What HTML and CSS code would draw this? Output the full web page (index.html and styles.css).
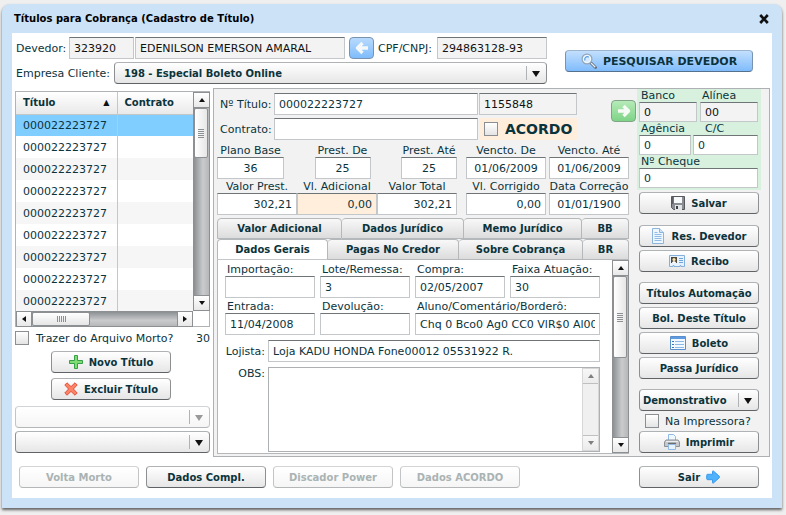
FILE: index.html
```html
<!DOCTYPE html>
<html lang="pt-BR">
<head>
    <meta charset="UTF-8">
    <meta name="viewport" content="width=device-width, initial-scale=1.0">
    <title>Títulos para Cobrança</title>
    <link rel="stylesheet" href="styles.css">
</head>
<body>
    <main class="window">
        <header class="title-bar">
            <h1>Títulos para Cobrança (Cadastro de Título)</h1>
            <button type="button" class="close" aria-label="Fechar">
                <svg width="10" height="10" viewBox="0 0 10 10"><path d="M1.2 1l7.600 8M8.800 1L1.200 9" stroke="#111" stroke-width="2.6"/></svg>
            </button>
        </header>

        <form class="content">
            <section class="search">
                <div class="search-fields">
                    <div class="line">
                        <label class="devedor-label" for="devedor">Devedor:</label>
                        <input class="readonly code" id="devedor" value="323920" readonly>
                        <input class="readonly name" aria-label="Nome" value="EDENILSON EMERSON AMARAL" readonly>
                        <button type="button" class="arrow-btn blue" aria-label="Voltar">
                            <svg width="14" height="14" viewBox="0 0 14 14"><path d="M7.500 2L2.500 7l5 5M3.500 7H13" fill="none" stroke="#f4f8fb" stroke-width="3.4" stroke-linejoin="round"/></svg>
                        </button>
                        <label class="cpf-label" for="cpf">CPF/CNPJ:</label>
                        <input class="readonly cpf" id="cpf" value="294863128-93" readonly>
                    </div>
                    <div class="line">
                        <label class="empresa-label" for="empresa">Empresa Cliente:</label>
                        <div class="combo empresa">
                            <select id="empresa"><option>198 - Especial Boleto Online</option></select>
                        </div>
                    </div>
                </div>
                <button type="button" class="btn btn-search">
                    <svg width="16" height="16" viewBox="0 0 16 16">
                        <path d="M10 10l4.500 4.500" stroke="#5d6a7a" stroke-width="2.8" stroke-linecap="round"/>
                        <path d="M10 10l4.300 4.300" stroke="#e3ebf3" stroke-width="1.3"/>
                        <circle cx="6" cy="6" r="4.900" fill="#d6ebfd" stroke="#93a5b8" stroke-width="1.2"/>
                        <circle cx="6" cy="6" r="3.600" fill="none" stroke="#f4faff" stroke-width="1"/>
                        <path d="M4 7.500a2.600 2.600 0 0 1 3.800-3.300" fill="none" stroke="#5b9fe0" stroke-width="1.2"/>
                    </svg>
                    PESQUISAR DEVEDOR
                </button>
            </section>

            <div class="columns">
                <!-- Lista de títulos -->
                <aside class="list">
                    <div class="grid-box">
                        <div class="grid-view">
                            <table>
                                <thead>
                                    <tr><th class="sorted">Título <span>▲</span></th><th>Contrato</th></tr>
                                </thead>
                                <tbody>
                                    <tr class="selected"><td>000022223727</td><td></td></tr>
                                    <tr><td>000022223727</td><td></td></tr>
                                    <tr><td>000022223727</td><td></td></tr>
                                    <tr><td>000022223727</td><td></td></tr>
                                    <tr><td>000022223727</td><td></td></tr>
                                    <tr><td>000022223727</td><td></td></tr>
                                    <tr><td>000022223727</td><td></td></tr>
                                    <tr><td>000022223727</td><td></td></tr>
                                    <tr><td>000022223727</td><td></td></tr>
                                </tbody>
                            </table>
                        </div>
                        <div class="scroll vertical">
                            <button type="button" class="up" aria-label="Subir"></button>
                            <div class="thumb list-thumb"></div>
                            <button type="button" class="down" aria-label="Descer"></button>
                        </div>
                        <div class="scroll horizontal">
                            <button type="button" class="left" aria-label="Esquerda"></button>
                            <div class="thumb wide-thumb"></div>
                            <button type="button" class="right" aria-label="Direita"></button>
                        </div>
                        <div class="corner"></div>
                    </div>
                    <div class="dead-file">
                        <input type="checkbox" id="morto">
                        <label for="morto">Trazer do Arquivo Morto?</label>
                        <span>30</span>
                    </div>
                    <div class="list-buttons">
                        <button type="button" class="btn">
                            <svg width="14" height="14" viewBox="0 0 14 14"><path d="M5.500.5h3v5h5v3h-5v5h-3v-5h-5v-3h5z" fill="#7fdc72" stroke="#35a046"/></svg>
                            Novo Título
                        </button>
                        <button type="button" class="btn">
                            <svg width="14" height="14" viewBox="0 0 14 14"><path d="M3 .8L7 4.600l4-3.800L13.200 3 9.400 7l3.800 4-2.200 2.200L7 9.400l-4 3.800L.8 11l3.800-4L.8 3z" fill="#fd8367" stroke="#e0503a"/></svg>
                            Excluir Título
                        </button>
                    </div>
                    <div class="combo off first-combo"><select aria-label="Filtro" disabled><option></option></select></div>
                    <div class="combo second-combo"><select aria-label="Ordem"><option></option></select></div>
                </aside>

                <section class="panel">
                    <div class="details">
                        <div class="top-fields">
                            <div class="top-lines">
                                <div class="line">
                                    <label class="top-label" for="titulo">Nº Título:</label>
                                    <input class="titulo" id="titulo" value="000022223727">
                                    <input class="readonly numero" aria-label="Número" value="1155848" readonly>
                                </div>
                                <div class="line">
                                    <label class="top-label" for="contrato">Contrato:</label>
                                    <input class="titulo" id="contrato">
                                    <div class="acordo">
                                        <input type="checkbox" id="acordo">
                                        <label for="acordo">ACORDO</label>
                                    </div>
                                </div>
                            </div>
                            <button type="button" class="arrow-btn green" aria-label="Avançar">
                                <svg width="14" height="14" viewBox="0 0 14 14"><path d="M6.500 2l5 5-5 5M1 7h9.500" fill="none" stroke="#f6fbf6" stroke-width="3.400" stroke-linejoin="round"/></svg>
                            </button>
                        </div>

                        <div class="values">
                            <div class="trio spread">
                                <div class="field plan"><label for="plano">Plano Base</label><input id="plano" value="36"></div>
                                <div class="field part"><label for="de">Prest. De</label><input id="de" value="25"></div>
                                <div class="field part"><label for="ate">Prest. Até</label><input id="ate" value="25"></div>
                            </div>
                            <div class="pair">
                                <div class="field"><label for="vde">Vencto. De</label><input id="vde" value="01/06/2009"></div>
                                <div class="field"><label for="vate">Vencto. Até</label><input id="vate" value="01/06/2009"></div>
                            </div>
                        </div>
                        <div class="values">
                            <div class="trio">
                                <div class="field money"><label for="vprest">Valor Prest.</label><input id="vprest" value="302,21"></div>
                                <div class="field money extra"><label for="vadic">Vl. Adicional</label><input id="vadic" value="0,00"></div>
                                <div class="field money"><label for="vtotal">Valor Total</label><input id="vtotal" value="302,21"></div>
                            </div>
                            <div class="pair">
                                <div class="field money"><label for="vcorr">Vl. Corrigido</label><input id="vcorr" value="0,00"></div>
                                <div class="field"><label for="dcorr">Data Correção</label><input id="dcorr" value="01/01/1900"></div>
                            </div>
                        </div>

                        <div class="tabs tabs-back">
                            <button type="button">Valor Adicional</button>
                            <button type="button">Dados Jurídico</button>
                            <button type="button">Memo Jurídico</button>
                            <button type="button">BB</button>
                        </div>
                        <div class="tabs tabs-front">
                            <button type="button" class="active">Dados Gerais</button>
                            <button type="button">Pagas No Credor</button>
                            <button type="button">Sobre Cobrança</button>
                            <button type="button">BR</button>
                        </div>
                        <div class="tab-body">
                            <div class="general">
                                <div class="general-grid">
                                    <div class="item"><label for="imp">Importação:</label><input id="imp"></div>
                                    <div class="item"><label for="lote">Lote/Remessa:</label><input id="lote" value="3"></div>
                                    <div class="item"><label for="compra">Compra:</label><input id="compra" value="02/05/2007"></div>
                                    <div class="item"><label for="faixa">Faixa Atuação:</label><input id="faixa" value="30"></div>
                                    <div class="item"><label for="entrada">Entrada:</label><input id="entrada" value="11/04/2008"></div>
                                    <div class="item"><label for="devol">Devolução:</label><input id="devol"></div>
                                    <div class="item double"><label for="aluno">Aluno/Comentário/Borderô:</label><input id="aluno" value="Chq 0 Bco0 Ag0 CC0 VlR$0 Al00"></div>
                                </div>
                                <div class="wide-line">
                                    <label for="lojista">Lojista:</label>
                                    <input id="lojista" value="Loja KADU HONDA Fone00012 05531922 R.">
                                </div>
                                <div class="wide-line obs">
                                    <label for="obs">OBS:</label>
                                    <div class="obs-box">
                                        <textarea id="obs"></textarea>
                                        <div class="scroll vertical faded">
                                            <button type="button" class="up" aria-label="Subir" disabled></button>
                                            <button type="button" class="down" aria-label="Descer" disabled></button>
                                        </div>
                                    </div>
                                </div>
                            </div>
                            <div class="scroll vertical">
                                <button type="button" class="up" aria-label="Subir"></button>
                                <div class="thumb body-thumb"></div>
                                <button type="button" class="down" aria-label="Descer"></button>
                            </div>
                        </div>
                    </div>

                    <div class="actions">
                        <div class="bank">
                            <div class="item half"><label for="banco">Banco</label><input class="readonly" id="banco" value="0" readonly></div>
                            <div class="item half"><label for="alinea">Alínea</label><input class="readonly" id="alinea" value="00" readonly></div>
                            <div class="item agency"><label for="agencia">Agência</label><input id="agencia" value="0"></div>
                            <div class="item account"><label for="cc">C/C</label><input id="cc" value="0"></div>
                            <div class="item full"><label for="cheque">Nº Cheque</label><input id="cheque" value="0"></div>
                        </div>
                        <div class="group">
                            <button type="button" class="btn">
                                <svg width="14" height="14" viewBox="0 0 14 14"><path d="M.5.5h13v13h-11l-2-2z" fill="#8a8e93" stroke="#55595e"/><path d="M1 1h1.500v7H1z" fill="#5c6065"/><path d="M3 1h8v6H3z" fill="#f7f9fb"/><path d="M4 9h7v5H4z" fill="#e3e6e9"/><path d="M5 10h2v3H5z" fill="#3e4247"/></svg>
                                Salvar
                            </button>
                        </div>
                        <div class="group">
                            <button type="button" class="btn">
                                <svg width="14" height="16" viewBox="0 0 14 16"><path d="M1.500.5h7l4 4v11h-11z" fill="#eef6fe" stroke="#8db4da"/><path d="M8.500.5v4h4" fill="#cfe3f7" stroke="#8db4da"/><path d="M3.500 4.500h3M3.500 6.500h7M3.500 8.500h7M3.500 10.500h7M3.500 12.500h7" stroke="#8fbbe4"/></svg>
                                Res. Devedor
                            </button>
                            <button type="button" class="btn">
                                <svg width="16" height="14" viewBox="0 0 16 14"><path d="M.5 1.500h15v11H12v-1h-1v1H5v-1H4v1H.5z" fill="#e6f2fd" stroke="#84aedb"/><path d="M2 3h6v6H2z" fill="#4d4a3c"/><circle cx="5" cy="5.500" r="1.600" fill="#f7dfae"/><path d="M3 9c0-2.500 4-2.500 4 0z" fill="#fff"/><path d="M10 4.500h4M10 6.500h4M10 8.500h4" stroke="#6fa5dc"/></svg>
                                Recibo
                            </button>
                        </div>
                        <div class="group">
                            <button type="button" class="btn">Títulos Automação</button>
                            <button type="button" class="btn">Bol. Deste Título</button>
                            <button type="button" class="btn">
                                <svg width="16" height="14" viewBox="0 0 16 14"><path d="M.5.5h15v13H.5z" fill="#f1f8ff" stroke="#5b8fcb"/><path d="M1 1h14v2H1z" fill="#5f9be0"/><path d="M5 5.500h9M5 8.500h9M5 11.500h9" stroke="#8fb9e4"/><path d="M2 5.500h2M2 8.500h2M2 11.500h2" stroke="#3b76bd"/></svg>
                                Boleto
                            </button>
                            <button type="button" class="btn">Passa Jurídico</button>
                        </div>
                        <div class="group print">
                            <div class="combo small"><select aria-label="Relatório"><option>Demonstrativo</option></select></div>
                            <div class="printer-check">
                                <input type="checkbox" id="impressora">
                                <label for="impressora">Na Impressora?</label>
                            </div>
                            <button type="button" class="btn">
                                <svg width="16" height="16" viewBox="0 0 16 16"><path d="M4.500.5h5l2 2V8h-7z" fill="#eff7ff" stroke="#8fbbe6"/><path d="M2 6h12l1.500 2v4.500H.5V8z" fill="#c6c9cc" stroke="#8d9195"/><path d="M2 7.500h12" stroke="#eceeef"/><path d="M4 9.500h8" stroke="#6a6e73" stroke-width="1.500"/><path d="M4.500 10.500h7v5h-7z" fill="#e6f2fe" stroke="#8fbbe6"/></svg>
                                Imprimir
                            </button>
                        </div>
                    </div>
                </section>
            </div>

            <footer class="bottom-bar">
                <button type="button" class="btn" disabled>Volta Morto</button>
                <button type="button" class="btn">Dados Compl.</button>
                <button type="button" class="btn" disabled>Discador Power</button>
                <button type="button" class="btn" disabled>Dados ACORDO</button>
                <button type="button" class="btn exit">
                    Sair
                    <svg width="14" height="14" viewBox="0 0 14 14"><path d="M6.500 1.500q0-1 1-.4l5.600 5q.8.900 0 1.800l-5.600 5q-1 .6-1-.4V9.700H1.700q-1 0-1-1V5.300q0-1 1-1h4.800z" fill="#4fb2fb" stroke="#3b9aee"/></svg>
                </button>
            </footer>
        </form>
    </main>
</body>
</html>
```
FILE: styles.css
```css
* {
    box-sizing: border-box;
}

body {
    margin: 0;
    padding: 4px 4px 6px 2px;
    background-color: #efefef;
    font-family: "DejaVu Sans", Verdana, sans-serif;
    font-size: 11px;
    line-height: 13px;
    color: #0b333c;
}

input,
select,
textarea,
button {
    font: inherit;
    color: inherit;
    margin: 0;
}

label {
    white-space: nowrap;
}

svg {
    flex: none;
}

.window {
    background-color: #cce2f7;
    border-radius: 8px 8px 0 0;
    padding: 0 10px 10px;
    box-shadow: 0 2px 3px rgba(0, 0, 0, 0.6);
}

.title-bar {
    display: flex;
    justify-content: space-between;
    align-items: center;
    height: 29px;
    padding: 0 2px;
}

.title-bar h1 {
    margin: 0;
    font-size: 10px;
    color: #000;
}

.close {
    display: flex;
    padding: 1px;
    border: none;
    background: none;
}

.content {
    background-color: #fff;
    padding: 4px 2px 10px 3px;
}

/* Text boxes */
input,
textarea {
    height: 22px;
    min-width: 0;
    padding: 0 4px;
    border: 1px solid #c4c7c9;
    border-top-color: #6f7476;
    border-radius: 0;
    background-color: #fff;
}

.readonly {
    background-color: #f3f3f3;
    color: #111;
}

input[type="checkbox"] {
    appearance: none;
    flex: none;
    width: 14px;
    height: 14px;
    padding: 0;
    border: 1px solid #8b8f92;
    background: linear-gradient(#fff, #e4e4e4);
}

/* Buttons */
.btn {
    display: flex;
    align-items: center;
    justify-content: center;
    gap: 6px;
    width: 120px;
    height: 22px;
    padding: 0;
    border: 1px solid;
    border-color: #b0b3b5 #8c9092 #5f6365;
    border-radius: 4px;
    background: linear-gradient(#fff, #e6e6e6);
    font-size: 10px;
    font-weight: bold;
    white-space: nowrap;
}

.btn:disabled {
    border-color: #d2d4d5 #c2c4c5 #b4b6b7;
    background: linear-gradient(#fff, #f5f5f5);
    color: #aab3b3;
}

.btn-search {
    width: 188px;
    margin-top: 13px;
    margin-right: 17px;
    background: linear-gradient(#c3dffd, #7fbcfc);
    border-color: #9db4cc #7893b0 #56718e;
    font-size: 11px;
}

.arrow-btn {
    display: flex;
    align-items: center;
    justify-content: center;
    flex: none;
    width: 25px;
    height: 22px;
    padding: 0;
    border-radius: 4px;
}

.blue {
    margin: 0 3px;
    border: 1px solid #7893b0;
    background: linear-gradient(#b9dafd, #7fbcfc);
}

.green {
    margin-top: 7px;
    border: 1px solid #7fa486;
    background: linear-gradient(#b6eab8, #7ed487);
}

/* Drop-downs */
.combo {
    position: relative;
}

.combo select {
    appearance: none;
    display: block;
    width: 100%;
    height: 22px;
    padding: 0 24px 0 9px;
    border: 1px solid;
    border-color: #b0b3b5 #8c9092 #5f6365;
    border-radius: 4px;
    background: linear-gradient(#fff, #e6e6e6);
    font-size: 10px;
    font-weight: bold;
}

.combo::before {
    content: "";
    position: absolute;
    top: 4px;
    right: 20px;
    height: 14px;
    border-left: 1px solid #b0b3b5;
    pointer-events: none;
}

.combo::after {
    content: "";
    position: absolute;
    top: 9px;
    right: 7px;
    border: 4px solid transparent;
    border-top: 6px solid #111;
    border-bottom: none;
    pointer-events: none;
}

.combo.off select {
    border-color: #d2d4d5 #c2c4c5 #b4b6b7;
    background: linear-gradient(#fff, #f5f5f5);
    opacity: 1;
}

.combo.off::after {
    border-top-color: #999;
}

.combo.small select {
    padding-left: 3px;
}

/* Scroll bars */
.scroll {
    display: flex;
    background: linear-gradient(to right, #8d9093, #c9cbcd 60%, #b5b7b9);
}

.vertical {
    flex-direction: column;
    width: 17px;
    border: 1px solid #8c9092;
}

.horizontal {
    height: 16px;
    border: 1px solid #8c9092;
    background: linear-gradient(#8d9093, #c9cbcd 60%, #b5b7b9);
}

.scroll button {
    display: flex;
    align-items: center;
    justify-content: center;
    flex: none;
    width: 15px;
    height: 15px;
    padding: 0;
    border: 0 solid #8c9092;
    background: linear-gradient(#fff, #e8e8e8);
}

.horizontal button {
    height: 14px;
}

.scroll button::before {
    content: "";
    border: 3px solid transparent;
}

.scroll .up::before {
    border-bottom: 4px solid #111;
    border-top: none;
}

.scroll .down::before {
    border-top: 4px solid #111;
    border-bottom: none;
}

.scroll .left::before {
    border-right: 4px solid #111;
    border-left: none;
}

.scroll .right::before {
    border-left: 4px solid #111;
    border-right: none;
}

.scroll .up {
    border-bottom-width: 1px;
}

.scroll .down {
    margin-top: auto;
    border-top-width: 1px;
}

.scroll .left {
    border-right-width: 1px;
}

.scroll .right {
    margin-left: auto;
    border-left-width: 1px;
}

.thumb {
    display: flex;
    align-items: center;
    justify-content: center;
    border: 1px solid #8c9092;
    border-radius: 2px;
    background: linear-gradient(to right, #fff, #e6e6e6);
}

.vertical .thumb {
    width: 14px;
}

.thumb::before {
    content: "";
    width: 6px;
    height: 9px;
    background: repeating-linear-gradient(#8c9092 0 1px, transparent 1px 2px);
}

.wide-thumb::before {
    width: 9px;
    height: 6px;
    background: repeating-linear-gradient(to right, #8c9092 0 1px, transparent 1px 2px);
}

.list-thumb {
    height: 50px;
}

.wide-thumb {
    width: 58px;
    background: linear-gradient(#fff, #e6e6e6);
}

.body-thumb {
    height: 82px;
}

.faded {
    border-color: #d5d7d8;
    background: #f0f0f0;
}

.faded button {
    opacity: 0.5;
}

/* Search area */
.search {
    display: flex;
    justify-content: space-between;
    align-items: flex-start;
}

.line {
    display: flex;
    align-items: center;
    gap: 1px;
}

.line + .line {
    margin-top: 3px;
}

.devedor-label {
    width: 53px;
    padding-left: 1px;
}

.code {
    width: 65px;
}

.name {
    width: 210px;
}

.cpf-label {
    width: 58px;
}

.cpf {
    width: 110px;
}

.empresa-label {
    width: 98px;
    padding-left: 1px;
}

.empresa {
    flex: 1;
}

/* Title list */
.columns {
    display: flex;
    gap: 3px;
    margin-top: 4px;
}

.list {
    flex: none;
    width: 195px;
    padding-top: 3px;
}

.grid-box {
    display: grid;
    grid-template-columns: 1fr 17px;
    grid-template-rows: 219px 16px;
    border-top: 1px solid #b0b3b5;
    border-left: 1px solid #b0b3b5;
}

.corner {
    border-right: 1px solid #b0b3b5;
    border-bottom: 1px solid #b0b3b5;
}

.grid-view {
    overflow: hidden;
}

.grid-view table {
    width: 100%;
    table-layout: fixed;
    border-collapse: collapse;
}

.grid-view th,
.grid-view td {
    height: 22px;
    padding: 0 7px;
    text-align: left;
}

.grid-view th {
    border-bottom: 1px solid #c4c7c9;
    background: linear-gradient(#fff, #e9e9e9);
    font-size: 10px;
}

.grid-view th:first-child {
    width: 101px;
}

.grid-view th:first-child,
.grid-view td:first-child {
    border-right: 1px solid #c4c7c9;
}

.sorted span {
    float: right;
    font-size: 8px;
    color: #111;
}

.grid-view tr:nth-child(odd) td {
    background-color: #f6f6f6;
}

.grid-view tr:nth-child(even) td {
    background-color: #fff;
}

.grid-view tr.selected td {
    background-color: #7fceff;
}

.dead-file {
    display: flex;
    align-items: center;
    gap: 7px;
    margin-top: 4px;
}

.dead-file span {
    margin-left: auto;
}

.list-buttons {
    display: grid;
    gap: 5px;
    margin-top: 6px;
    padding-left: 36px;
}

.first-combo {
    margin-top: 6px;
}

.second-combo {
    margin-top: 3px;
}

/* Details panel */
.panel {
    flex: 1;
    display: flex;
    gap: 8px;
    min-width: 0;
    padding: 0 8px 2px 3px;
    border: 1px solid #aeb1b3;
    background-color: #f2f2f2;
}

.details {
    flex: 1;
    display: flex;
    flex-direction: column;
    min-width: 0;
    padding-top: 4px;
}

.top-fields {
    display: flex;
    justify-content: space-between;
    align-items: flex-start;
    margin-right: -7px;
}

.top-label {
    width: 56px;
    padding-left: 3px;
}

.titulo {
    width: 204px;
}

.numero,
.acordo {
    width: 98px;
}

.acordo {
    display: flex;
    align-items: center;
    gap: 7px;
    height: 22px;
    padding-left: 5px;
    background-color: #feeedb;
    font-size: 14px;
    font-weight: bold;
}

.values {
    display: flex;
    gap: 9px;
    margin-top: 4px;
}

.values + .values {
    margin-top: 1px;
}

.trio {
    flex: 240;
    display: flex;
}

.spread {
    justify-content: space-between;
}

.pair {
    flex: 163;
    display: flex;
    gap: 3px;
}

.field {
    flex: 1;
    display: flex;
    flex-direction: column;
    align-items: center;
    min-width: 0;
}

.field input {
    width: 100%;
    text-align: center;
}

.spread .plan {
    flex: none;
    width: 67px;
}

.spread .part {
    flex: none;
    width: 56px;
}

.money input {
    text-align: right;
}

.extra input {
    background-color: #feeedb;
}

/* Tabs */
.tabs {
    display: grid;
    margin-top: 3px;
}

.tabs-back {
    grid-template-columns: 125fr 122fr 118fr 47fr;
}

.tabs-front {
    grid-template-columns: 111fr 131fr 124fr 46fr;
    margin-top: 0;
}

.tabs button {
    height: 21px;
    padding: 0;
    border: 1px solid #b5b8ba;
    border-left-width: 0;
    border-radius: 4px 4px 0 0;
    background: linear-gradient(#f8f8f8, #dcdcdc);
    font-size: 10px;
    font-weight: bold;
    white-space: nowrap;
}

.tabs button:first-child {
    border-left-width: 1px;
}

.tabs .active {
    border-bottom-color: #c4c7c9;
    background: #fff;
}

.tab-body {
    flex: 1;
    display: flex;
    justify-content: space-between;
    gap: 12px;
    padding-left: 7px;
    border: 1px solid #b5b8ba;
    border-top: none;
    border-right: none;
    background-color: #fff;
}

.general {
    flex: 1;
    display: flex;
    flex-direction: column;
    min-width: 0;
    padding: 3px 0 1px;
}

.general-grid {
    display: grid;
    grid-template-columns: repeat(4, 1fr);
    gap: 2px 5px;
}

.item {
    display: flex;
    flex-direction: column;
    min-width: 0;
}

.item label {
    padding-left: 2px;
}

.double {
    grid-column: span 2;
}

.wide-line {
    display: flex;
    align-items: center;
    margin-top: 5px;
}

.wide-line label {
    width: 43px;
    padding-right: 3px;
    text-align: right;
}

.wide-line input {
    flex: 1;
}

.obs {
    align-items: stretch;
}

.obs-box {
    flex: 1;
    display: flex;
    height: 85px;
    border: 1px solid #aeb1b3;
}

.obs-box textarea {
    flex: 1;
    height: 100%;
    border: none;
    resize: none;
}

/* Right column */
.actions {
    flex: none;
    width: 124px;
}

.bank {
    display: flex;
    flex-wrap: wrap;
    justify-content: space-between;
    padding: 0 3px 2px 2px;
    background-color: #d8f1df;
}

.bank input {
    height: 20px;
}

.half {
    width: 58px;
}

.agency {
    width: 52px;
}

.account {
    width: 65px;
}

.account label {
    padding-left: 12px;
}

.full {
    width: 100%;
}

.group {
    display: grid;
    gap: 3px;
    padding: 0 2px;
    margin-top: 10px;
}

.bank + .group {
    margin-top: 2px;
}

.bank + .group + .group {
    margin-top: 11px;
}

.printer-check {
    display: flex;
    align-items: center;
    gap: 6px;
    padding-left: 6px;
}

/* Bottom bar */
.bottom-bar {
    display: flex;
    gap: 7px;
    margin-top: 9px;
    padding: 0 11px 0 4px;
}

.exit {
    margin-left: auto;
}
```
